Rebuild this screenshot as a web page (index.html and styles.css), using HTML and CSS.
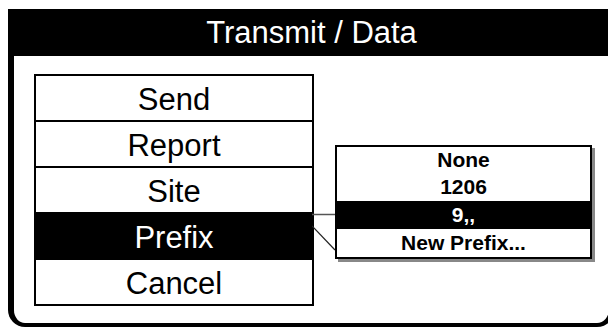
FILE: index.html
```html
<!DOCTYPE html>
<html lang="en">
<head>
    <meta charset="UTF-8">
    <meta name="viewport" content="width=device-width, initial-scale=1.0">
    <title>Transmit / Data</title>
    <link rel="stylesheet" href="styles.css">
</head>
<body>
    <div class="screen">
        <div class="title-bar">Transmit / Data</div>
        <div class="content">
            <ul class="menu">
                <li>Send</li>
                <li>Report</li>
                <li>Site</li>
                <li class="selected">Prefix</li>
                <li>Cancel</li>
            </ul>
        </div>

        <!-- connector from Prefix to its popup -->
        <svg class="connector" width="26" height="44" viewBox="0 0 26 44">
            <line x1="0" y1="4.5" x2="26" y2="4.5" stroke="#555" stroke-width="1.5"/>
            <line x1="0" y1="16" x2="23" y2="40" stroke="#222" stroke-width="1.2"/>
        </svg>

        <ul class="submenu">
            <li>None</li>
            <li>1206</li>
            <li class="selected">9,,</li>
            <li>New Prefix...</li>
        </ul>
    </div>
</body>
</html>
```

FILE: styles.css
```css
body {
    margin: 0;
    background-color: #fff;
    font-family: "Liberation Sans", Arial, sans-serif;
    overflow: hidden;
}

.screen {
    position: relative;
    margin: 9px 0 0 8px;
    width: 607px;
    height: 318px;
    box-sizing: border-box;
    border: 6px solid #000;
    border-top: none;
    border-bottom-width: 4px;
    border-radius: 0 0 18px 17px;
}

.title-bar {
    margin: 0 -6px;
    height: 47px;
    line-height: 47px;
    background-color: #000;
    color: #fff;
    font-size: 31px;
    text-align: center;
}

.content {
    padding: 18px 0 0 20px;
}

.menu {
    list-style: none;
    margin: 0;
    padding: 0;
    width: 276px;
    border: 2px solid #000;
}

.menu li {
    height: 44px;
    line-height: 48px;
    font-size: 31px;
    text-align: center;
    color: #000;
    overflow: hidden;
}

.menu li + li {
    border-top: 2px solid #000;
}

.menu li.selected,
.submenu li.selected {
    background-color: #000;
    color: #fff;
}

.connector {
    position: absolute;
    left: 298px;
    top: 201px;
}

.submenu {
    position: absolute;
    left: 321px;
    top: 136px;
    width: 253px;
    list-style: none;
    margin: 0;
    padding: 0;
    background-color: #fff;
    border: 2px solid #000;
    box-shadow: 3px 3px 0 #888;
}

.submenu li {
    height: 28px;
    line-height: 28px;
    font-size: 21px;
    font-weight: bold;
    text-align: center;
}

.submenu li:first-child {
    height: 26px;
    line-height: 26px;
}
```
